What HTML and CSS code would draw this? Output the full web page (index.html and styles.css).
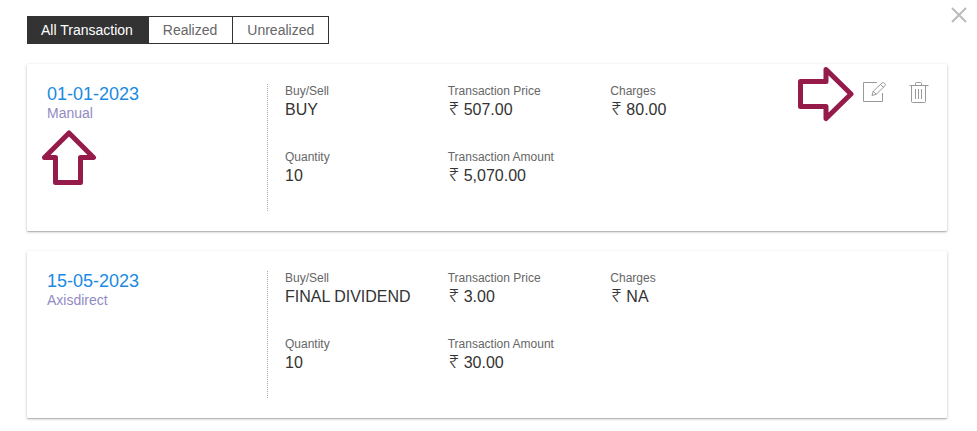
FILE: index.html
```html
<!DOCTYPE html>
<html lang="en">
<head>
<meta charset="utf-8">
<title>Transactions</title>
<link rel="stylesheet" href="styles.css">
</head>
<body>
<button class="close" type="button" aria-label="Close">
  <svg width="16" height="16" viewBox="0 0 16 16"><path d="M1 1L15 15M15 1L1 15"/></svg>
</button>
<main class="page">
  <nav class="tabs" aria-label="Transaction type">
    <button class="tab tab-active" type="button">All Transaction</button>
    <button class="tab" type="button">Realized</button>
    <button class="tab" type="button">Unrealized</button>
  </nav>

  <article class="card">
    <header class="source">
      <h2 class="date">01-01-2023</h2>
      <p class="origin">Manual</p>
    </header>
    <div class="details">
      <dl class="facts">
        <div><dt>Buy/Sell</dt><dd>BUY</dd></div>
        <div><dt>Transaction Price</dt><dd><span class="rupee">₹</span>507.00</dd></div>
        <div><dt>Charges</dt><dd><span class="rupee">₹</span>80.00</dd></div>
        <div><dt>Quantity</dt><dd>10</dd></div>
        <div><dt>Transaction Amount</dt><dd><span class="rupee">₹</span>5,070.00</dd></div>
      </dl>
      <div class="actions">
        <button class="action" type="button" aria-label="Edit">
          <svg width="24" height="22" viewBox="0 0 24 22"><path d="M14 .5H.5V19.500H19.500V11"/><path d="M9 13.500L10.200 9.200L19.300 .8Q20.500 .2 21.600 1.300Q22.700 2.500 22.100 3.600L13.200 12.300ZM10.200 9.200L13.200 12.300M17.500 2.500L20.500 5.500"/></svg>
        </button>
        <button class="action" type="button" aria-label="Delete">
          <svg width="20" height="22" viewBox="0 0 20 22"><path d="M.5 3.500H19.500M6.500 3V1.500Q6.500 .5 7.500 .5H11.500Q12.500 .5 12.500 1.500V3M2.500 4V19.500Q2.500 20.500 3.500 20.500H15.500Q16.500 20.500 16.500 19.500V4M6.500 7V17M9.500 7V17M12.500 7V17"/></svg>
        </button>
      </div>
    </div>
    <svg class="pointer pointer-up" width="56" height="57" viewBox="0 0 56 57"><path d="M28 3L52.500 27.500H39.500V52.500H14.500V27.500H3.500Z"/></svg>
    <svg class="pointer pointer-right" width="57" height="56" viewBox="0 0 57 56"><path d="M3.500 15.500H29V3.500L54 28L29 52.500V40.500H3.500Z"/></svg>
  </article>

  <article class="card">
    <header class="source">
      <h2 class="date">15-05-2023</h2>
      <p class="origin">Axisdirect</p>
    </header>
    <div class="details">
      <dl class="facts">
        <div><dt>Buy/Sell</dt><dd>FINAL DIVIDEND</dd></div>
        <div><dt>Transaction Price</dt><dd><span class="rupee">₹</span>3.00</dd></div>
        <div><dt>Charges</dt><dd><span class="rupee">₹</span>NA</dd></div>
        <div><dt>Quantity</dt><dd>10</dd></div>
        <div><dt>Transaction Amount</dt><dd><span class="rupee">₹</span>30.00</dd></div>
      </dl>
      <div class="actions"></div>
    </div>
  </article>
</main>
</body>
</html>
```
FILE: styles.css
```css
* {
  box-sizing: border-box;
}

body {
  margin: 0;
  background: #fff;
  color: #333;
  font-family: "Liberation Sans", Arial, sans-serif;
}

h2, p, dl, dt, dd {
  margin: 0;
  font-weight: 400;
}

button {
  border: 0;
  background: none;
  font-family: inherit;
  cursor: pointer;
}

svg {
  display: block;
  fill: none;
}

.page {
  padding: 16px 30px 12px 27px;
}

.close {
  position: absolute;
  top: 7px;
  right: 10px;
  padding: 0;
  stroke: #bbb;
  stroke-width: 2;
}

.tabs {
  display: inline-flex;
  height: 28px;
  margin-bottom: 20px;
  border: 1px solid #333;
  vertical-align: top;
}

.tab {
  padding: 0 15px 0 14px;
  border-left: 1px solid #333;
  color: #666;
  font-size: 14px;
  line-height: 26px;
}

.tab:last-child {
  padding-right: 14px;
}

.tab-active {
  padding-left: 13px;
  border-left: 0;
  background: #333;
  color: #fff;
}

.card {
  position: relative;
  display: flex;
  margin-bottom: 20px;
  padding: 20px;
  border-radius: 1px;
  background: #fff;
  box-shadow: 0 1px 3px rgba(0, 0, 0, 0.25), 0 1px 1px rgba(0, 0, 0, 0.15);
}

.card:last-child {
  margin-bottom: 0;
}

.source {
  flex: 0 0 25%;
}

.date {
  color: #1a8ae2;
  font-size: 18px;
  line-height: 20px;
}

.origin {
  color: #918bc3;
  font-size: 14px;
  line-height: 18px;
}

.details {
  display: flex;
  flex: 1;
  padding-left: 17px;
  border-left: 1px dotted #aaa;
}

.facts {
  display: grid;
  flex: 1;
  grid-template-columns: repeat(3, 1fr);
  row-gap: 28px;
  padding-bottom: 23px;
}

dt {
  color: #666;
  font-size: 12px;
  line-height: 14px;
}

dd {
  font-size: 16px;
  line-height: 24px;
}

.rupee {
  display: inline-block;
  width: 16px;
  padding-left: 1px;
  font-family: "Open Sans", "Noto Sans", sans-serif;
  font-size: 18px;
  font-weight: 300;
  line-height: 16px;
}

.actions {
  display: flex;
  flex: 0 0 156px;
  align-items: flex-start;
  justify-content: flex-end;
  gap: 22px;
  margin: -2px -2px 0 0;
}

.action {
  padding: 0;
  stroke: #999;
}

.pointer {
  position: absolute;
  stroke: #951b4b;
  stroke-width: 5;
  stroke-linejoin: round;
}

.pointer-up {
  top: 66px;
  left: 14px;
}

.pointer-right {
  top: 2px;
  right: 93px;
}
```
